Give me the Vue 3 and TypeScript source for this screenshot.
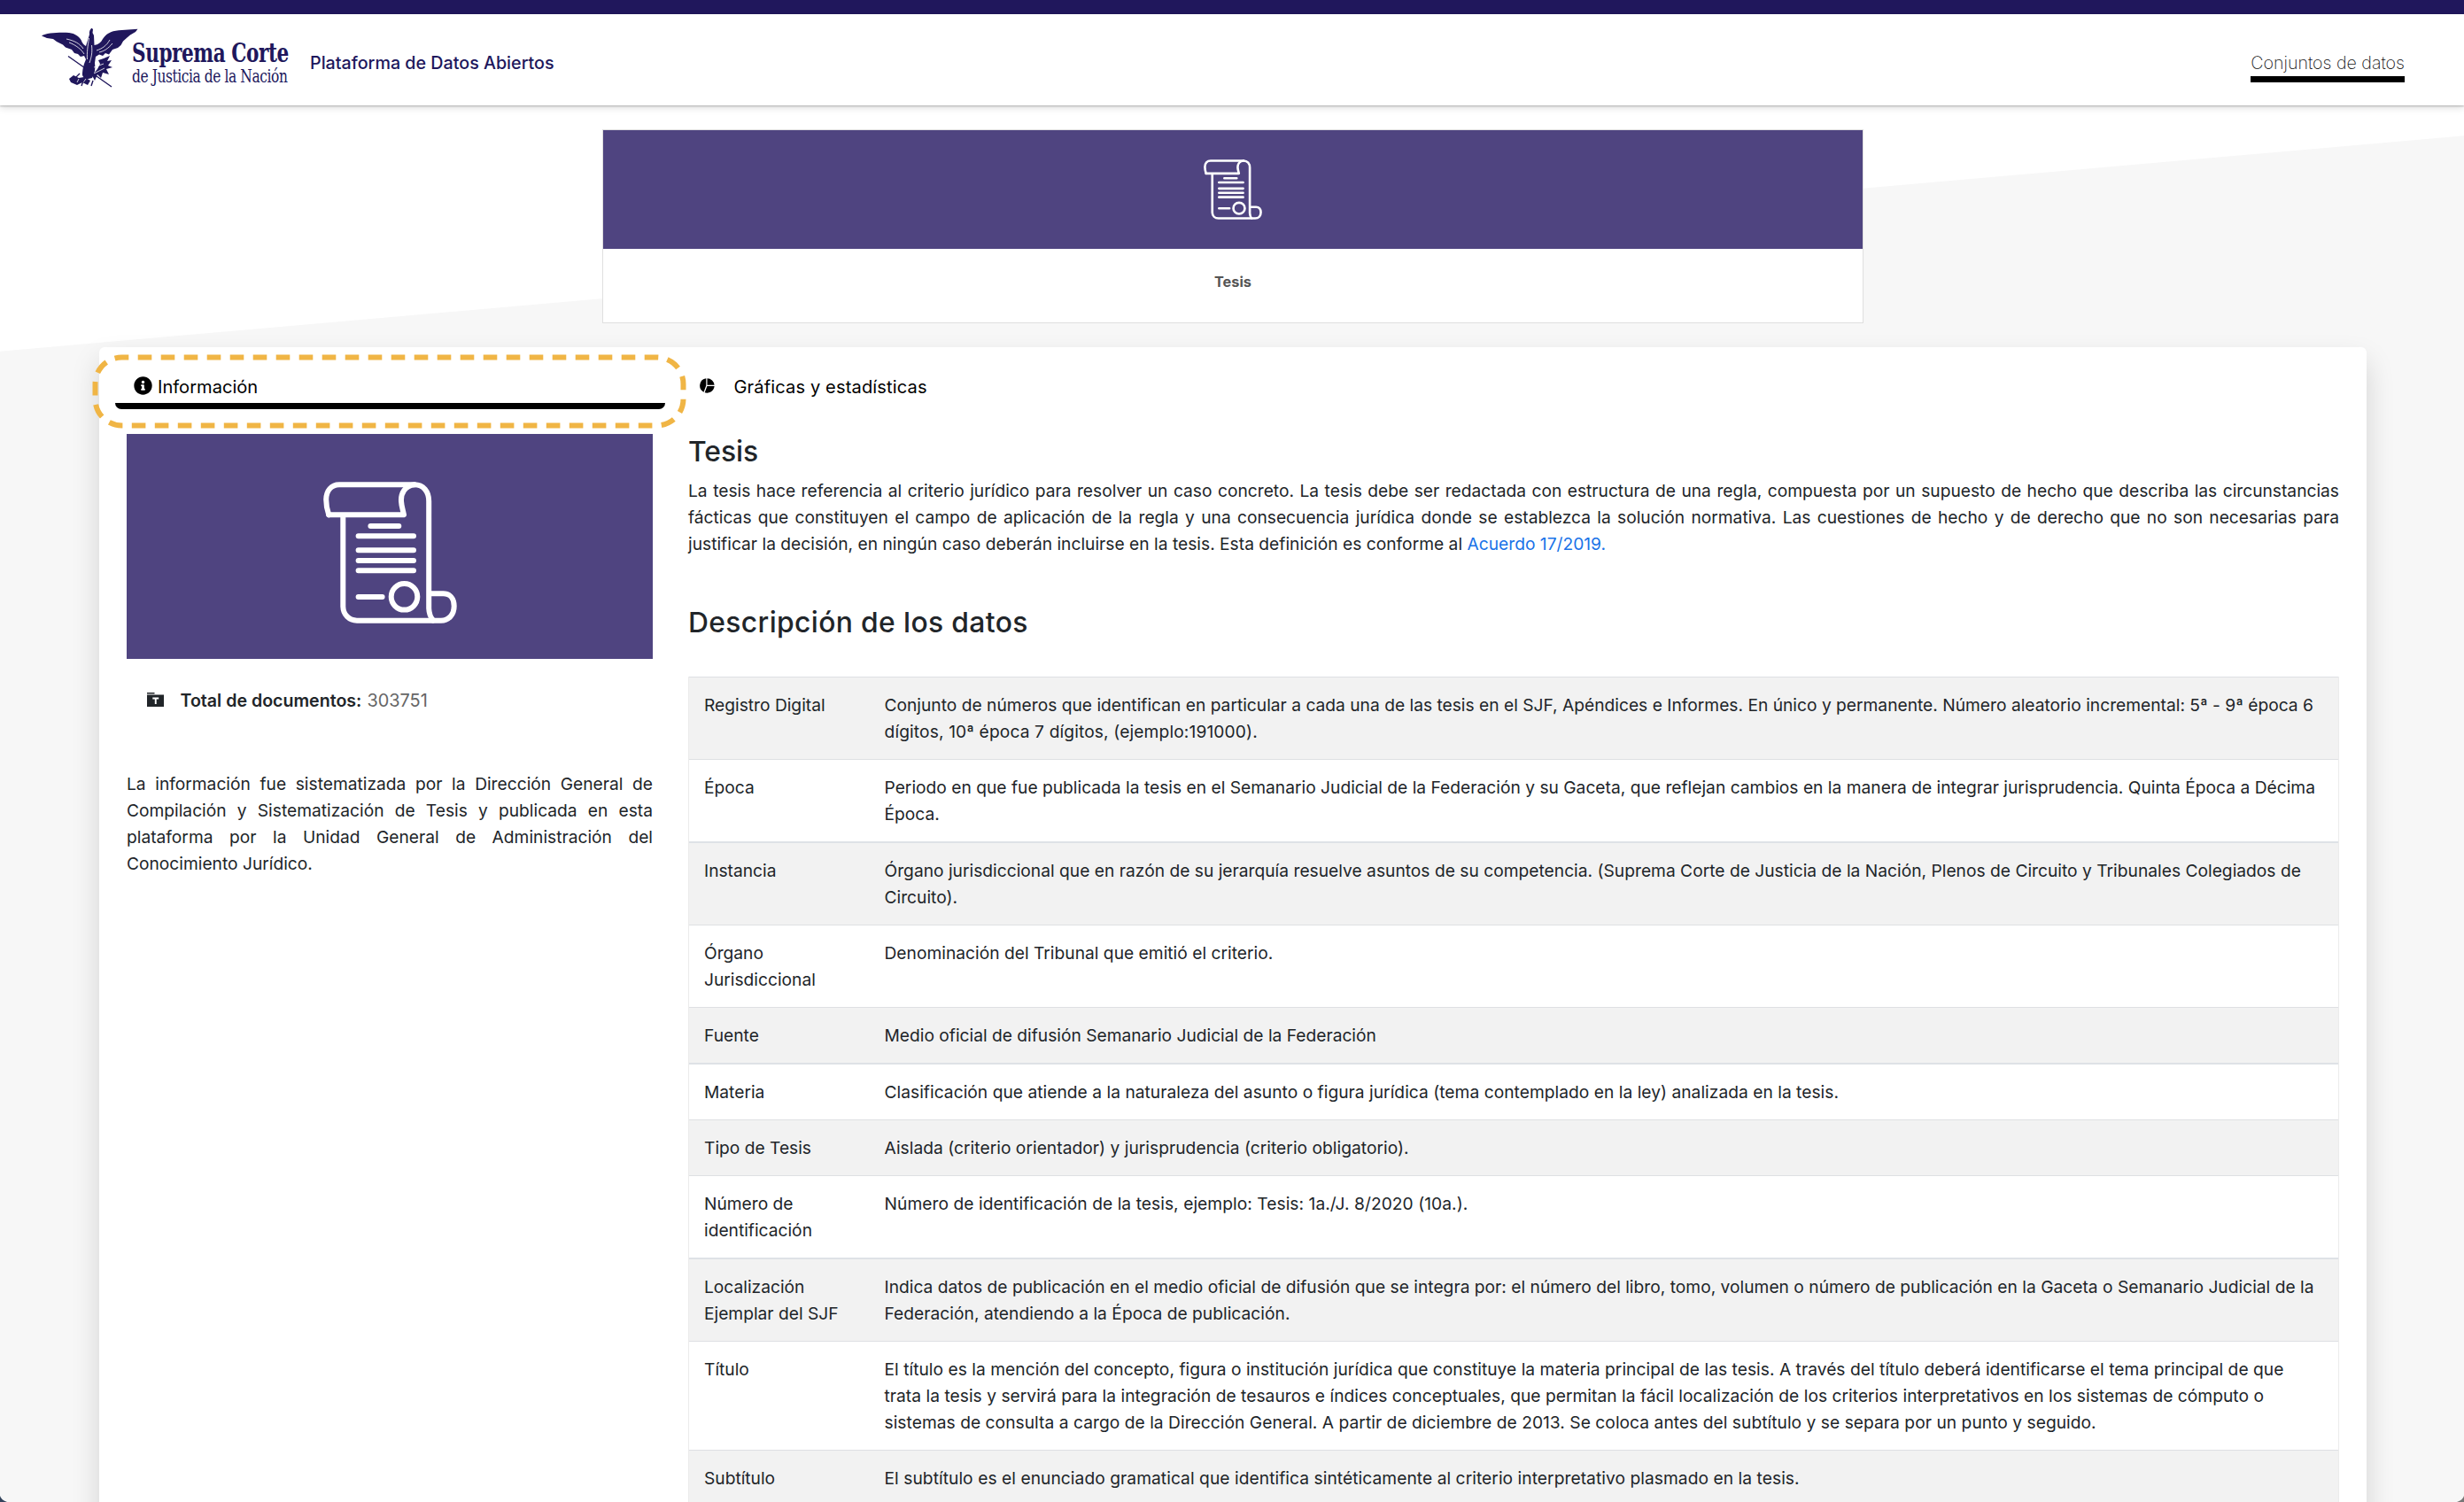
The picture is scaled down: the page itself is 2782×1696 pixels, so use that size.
<script setup lang="ts">
interface Row {
  name: string[]
  lines: string[]
  /** Letter spacing of each line, in pixels. */
  tracking: number[]
  thick?: boolean
}

const definition: string[] = [
  'La tesis hace referencia al criterio jurídico para resolver un caso concreto. La tesis debe ser redactada con estructura de una regla, compuesta por un supuesto de hecho que describa las circunstancias',
  'fácticas que constituyen el campo de aplicación de la regla y una consecuencia jurídica donde se establezca la solución normativa. Las cuestiones de hecho y de derecho que no son necesarias para',
]

const source: string[] = [
  'La información fue sistematizada por la Dirección General de',
  'Compilación y Sistematización de Tesis y publicada en esta',
  'plataforma por la Unidad General de Administración del',
]

const rows: Row[] = [
  {
    name: ['Registro Digital'],
    tracking: [0.005, 0.13],
    lines: [
      'Conjunto de números que identifican en particular a cada una de las tesis en el SJF, Apéndices e Informes. En único y permanente. Número aleatorio incremental: 5ª - 9ª época 6',
      'dígitos, 10ª época 7 dígitos, (ejemplo:191000).',
    ],
  },
  {
    name: ['Época'],
    tracking: [0.01, 0.01],
    lines: [
      'Periodo en que fue publicada la tesis en el Semanario Judicial de la Federación y su Gaceta, que reflejan cambios en la manera de integrar jurisprudencia. Quinta Época a Décima',
      'Época.',
    ],
  },
  {
    name: ['Instancia'],
    tracking: [0.014, 0.01],
    thick: true,
    lines: [
      'Órgano jurisdiccional que en razón de su jerarquía resuelve asuntos de su competencia. (Suprema Corte de Justicia de la Nación, Plenos de Circuito y Tribunales Colegiados de',
      'Circuito).',
    ],
  },
  { name: ['Órgano', 'Jurisdiccional'], tracking: [0.015], lines: ['Denominación del Tribunal que emitió el criterio.'] },
  { name: ['Fuente'], tracking: [0], lines: ['Medio oficial de difusión Semanario Judicial de la Federación'] },
  {
    name: ['Materia'],
    tracking: [0.03],
    thick: true,
    lines: ['Clasificación que atiende a la naturaleza del asunto o figura jurídica (tema contemplado en la ley) analizada en la tesis.'],
  },
  { name: ['Tipo de Tesis'], tracking: [0.035], lines: ['Aislada (criterio orientador) y jurisprudencia (criterio obligatorio).'] },
  { name: ['Número de', 'identificación'], tracking: [0.055], lines: ['Número de identificación de la tesis, ejemplo: Tesis: 1a./J. 8/2020 (10a.).'] },
  {
    name: ['Localización', 'Ejemplar del SJF'],
    tracking: [0.015, 0.03],
    thick: true,
    lines: [
      'Indica datos de publicación en el medio oficial de difusión que se integra por: el número del libro, tomo, volumen o número de publicación en la Gaceta o Semanario Judicial de la',
      'Federación, atendiendo a la Época de publicación.',
    ],
  },
  {
    name: ['Título'],
    tracking: [0.035, 0.03, 0.04],
    lines: [
      'El título es la mención del concepto, figura o institución jurídica que constituye la materia principal de las tesis. A través del título deberá identificarse el tema principal de que',
      'trata la tesis y servirá para la integración de tesauros e índices conceptuales, que permitan la fácil localización de los criterios interpretativos en los sistemas de cómputo o',
      'sistemas de consulta a cargo de la Dirección General. A partir de diciembre de 2013. Se coloca antes del subtítulo y se separa por un punto y seguido.',
    ],
  },
  { name: ['Subtítulo'], tracking: [0.057], lines: ['El subtítulo es el enunciado gramatical que identifica sintéticamente al criterio interpretativo plasmado en la tesis.'] },
]
</script>

<template>
  <div class="page">
    <svg class="slope" viewBox="0 0 2782 1696" preserveAspectRatio="none"><path d="M0 396.7 2782 153.3V1696H0Z" fill="#f7f7f7" /></svg>

    <svg width="0" height="0" class="defs">
      <symbol id="scroll" viewBox="0 0 151 160" preserveAspectRatio="none">
        <g fill="none" stroke="#fff" stroke-width="6" stroke-linecap="round" stroke-linejoin="round">
          <path d="M6.2 37.3C4.4 32 3.2 27 3.2 20C3.4 10 9 3.3 18 3.3H103C113 3.3 119.2 11 119.2 22V143C119.4 148 121 153 124 156.5" />
          <path d="M103 3.3C92 4.5 87.5 13 88 22C88.3 27.5 90 32 91 37.3H6.2" />
          <path d="M22.3 38V141C22.6 150 29 156.7 38 156.7H133C142 156.7 147.7 149.5 147.7 140.5C147.7 132 143 126.3 135.5 126.3H120" />
          <path d="M53.4 50H85.3M39.6 61.3H102M39.6 77.3H102M39.6 89H102M39.6 100.3H102M39.6 130H66.6" />
          <circle cx="91.5" cy="129.8" r="14.8" />
        </g>
      </symbol>
    </svg>

    <div class="strip"></div>
    <header class="header">
      <svg class="eagle" viewBox="0 0 109 68" width="109" height="68">
        <g fill="#20175c">
          <path d="M0 9.500C5 6 20 5.500 31 6C38 7 42 10 44.500 14C46 18 48 20 50 21L54 8C53.500 5 54.500 2 56.500.7L58 2L57.500 6L59 9L59.500 20C64 19.500 67 17 69 13C72 8 78 4 87 3.300L108.500 1.700L106 5L100 8.500L97 11L92 15.500L89.500 20L86 23L80 25L76 30.500L72 29L69 32L65 30.500L61 33L60 40C61 46 60 52 57 57L49 59L46 54C46 46 48 41 50 36L48 32L44 33L41 30L37 29L34 25L27 22.500L24 19.500L17 16L13 13L6 12Z" />
          <path d="M70 35L77 32L74 38L79 37L75 43L80 45L73 47L76 53L69 51L67 57L63 53L60 60L57 54L63 47L66 41L64 37Z" />
          <path d="M31 58L36 54L42 57L48 56L55 60L52 65L46 62L40 65L33 62Z" />
        </g>
        <g fill="none" stroke="#fff" stroke-width=".8">
          <path d="M53.500 12C52 22 51 28 51.500 36M56.500 20C57.500 29 56 34 54 40M31 17C39 20 45 25 48 30M28 13C37 15 43 18 47 24M77 14C73 21 68 24 62 26M80 18C75 24 70 27 65 28M59 45L70 41M59 52L71 46M50 58L47 62M42 58L40 62" />
        </g>
        <path d="M30 32.500L79 67M43 52L35 60M58 60L56 66M47 60L45 66" fill="none" stroke="#20175c" stroke-width="1.400" />
      </svg>
      <div class="court">
        <span class="court-name">Suprema Corte</span>
        <span class="court-sub">de Justicia de la Nación</span>
      </div>
      <span class="brand">Plataforma de Datos Abiertos</span>
      <a class="nav">Conjuntos de datos</a>
    </header>

    <section class="card">
      <div class="card-img"><svg width="66" height="68"><use href="#scroll" /></svg></div>
      <div class="card-title">Tesis</div>
    </section>

    <main class="panel">
      <svg class="ring" width="672" height="86" viewBox="0 0 672 86">
        <rect x="3.5" y="3.500" width="664" height="77" rx="30" fill="none" stroke="#f0b545" stroke-width="6" stroke-dasharray="15.6 10.4" stroke-dashoffset="-18.2" />
      </svg>
      <nav class="tabs">
        <div class="tab active">
          <svg width="21" height="21" viewBox="0 0 512 512"><path d="M256 8C119 8 8 119 8 256s111 248 248 248 248-111 248-248S393 8 256 8zm0 110a42 42 0 1 1 0 84 42 42 0 0 1 0-84zm56 254a12 12 0 0 1-12 12h-88a12 12 0 0 1-12-12v-24a12 12 0 0 1 12-12h12v-64h-12a12 12 0 0 1-12-12v-24a12 12 0 0 1 12-12h64a12 12 0 0 1 12 12v100h12a12 12 0 0 1 12 12z" /></svg>
          <span>Información</span>
        </div>
        <div class="tab">
          <svg width="17" height="17" viewBox="0 0 17 17"><path d="M7.300.2V8.200L4.500 15.700A8.300 8.300 0 0 1 7.300.2ZM8.500.2A8.300 8.300 0 0 1 16.600 7.800H8.500ZM16.600 8.900A8.300 8.300 0 0 1 5.700 16.200L8.400 8.900Z" /></svg>
          <span class="wide">Gráficas y estadísticas</span>
        </div>
      </nav>

      <div class="columns">
        <aside class="side">
          <div class="side-img"><svg width="151" height="160"><use href="#scroll" /></svg></div>
          <div class="total">
            <svg width="19" height="16" viewBox="0 0 19 16"><path d="M0 0H8.500V1.500H0ZM0 2.500H19V16H0Z" fill="#212529" /><path d="M6.300 5.500H13.200V7.500H10.700V13H8.800V7.500H6.300Z" fill="#fff" /></svg>
            <b>Total de documentos:</b><span>303751</span>
          </div>
          <p class="source">
            <span v-for="line in source" :key="line" class="line full">{{ line }}</span>
            <span class="line">Conocimiento Jurídico.</span>
          </p>
        </aside>

        <article class="content">
          <h2 class="first">Tesis</h2>
          <p class="definition">
            <span v-for="line in definition" :key="line" class="line full">{{ line }}</span>
            <span class="line last">justificar la decisión, en ningún caso deberán incluirse en la tesis. Esta definición es conforme al <a>Acuerdo 17/2019.</a></span>
          </p>
          <h2 class="second">Descripción de los datos</h2>
          <div class="table">
            <div v-for="row in rows" :key="row.name[0]" class="row" :class="{ thick: row.thick }">
              <div class="cell name"><span v-for="line in row.name" :key="line" class="line">{{ line }}</span></div>
              <div class="cell">
                <span v-for="(line, i) in row.lines" :key="line" class="line" :style="{ letterSpacing: row.tracking[i] + 'px' }">{{ line }}</span>
              </div>
            </div>
          </div>
        </article>
      </div>
    </main>

    <svg class="corner left" width="8" height="7"><path d="M0 0Q1.500 5 8 7H0Z" fill="#34435c" /></svg>
    <svg class="corner right" width="8" height="7"><path d="M8 0Q6.500 5 0 7H8Z" fill="#777" /></svg>
  </div>
</template>

<style>
body {
  margin: 0;
  background: #fff;
}
</style>

<style scoped>
.page {
  position: relative;
  width: 2782px;
  height: 1696px;
  overflow: hidden;
  background: #fff;
  color: #212529;
  font-family: Inter, "Liberation Sans", sans-serif;
  font-size: 19.2px;
  line-height: 30px;
}
.page * {
  box-sizing: border-box;
}
.slope {
  position: absolute;
  inset: 0;
  width: 2782px;
  height: 1696px;
}
.defs {
  position: absolute;
}
.strip {
  position: relative;
  height: 16px;
  background: #20175c;
}
.header {
  position: relative;
  display: flex;
  align-items: flex-start;
  height: 103px;
  padding: 15px 67px 0 47px;
  background: #fff;
  box-shadow: 0 1px 2px rgba(0, 0, 0, 0.25), 0 3px 8px rgba(0, 0, 0, 0.12);
}
.eagle {
  flex: none;
}
.court {
  display: flex;
  flex-direction: column;
  width: 177px;
  margin: 11.5px 0 0 -7.5px;
  color: #20175c;
  font-family: "DejaVu Serif Condensed", "DejaVu Serif", serif;
  white-space: nowrap;
}
.court-name {
  width: max-content;
  font-size: 29px;
  font-weight: 700;
  line-height: 34px;
  letter-spacing: -0.5px;
  transform: scaleX(0.826);
  transform-origin: 0 0;
}
.court-sub {
  width: max-content;
  margin-top: -2px;
  font-size: 21px;
  line-height: 22px;
  letter-spacing: -0.5px;
  transform: scaleX(0.817);
  transform-origin: 0 0;
}
.brand {
  margin: 25px auto 0 24.5px;
  color: #20175c;
  font-size: 19.7px;
  font-weight: 500;
}
.nav {
  margin-top: 25px;
  height: 37px;
  border-bottom: 7px solid #000;
  color: #111;
  font-size: 19.6px;
  font-weight: 200;
}
.card {
  position: relative;
  width: 1424px;
  height: 219px;
  margin: 27px 0 0 680px;
  border: 1px solid #dfdfdf;
  background: #fff;
}
.card-img {
  display: flex;
  align-items: center;
  justify-content: center;
  height: 134px;
  background: #4f4480;
}
.card-title {
  padding-top: 25px;
  color: #555;
  font-size: 16.3px;
  font-weight: 700;
  line-height: 24px;
  text-align: center;
}
.panel {
  position: relative;
  width: 2560px;
  height: 1400px;
  margin: 27px 0 0 112px;
  border-radius: 6px;
  background: #fff;
  box-shadow: 0 16px 32px rgba(0, 0, 0, 0.15);
}
.ring {
  position: absolute;
  top: 7.5px;
  left: -8.5px;
}
.tabs {
  display: flex;
  padding: 26px 0 0 18px;
  color: #000;
  font-size: 20.1px;
}
.tab {
  display: flex;
  align-items: flex-start;
  width: 621px;
  height: 44px;
  padding: 4px 0 0 21px;
}
.tab svg {
  flex: none;
  margin: 3px 6px 0 0;
}
.tab + .tab {
  padding-left: 39px;
}
.tab + .tab svg {
  margin: 5px 21.5px 0 0;
}
.wide {
  letter-spacing: 0.12px;
}
.active {
  border-bottom: 7px solid #000;
  border-radius: 0 0 7px 7px;
}
.columns {
  display: flex;
  gap: 40px;
  padding: 28px 31px 0;
}
.side {
  width: 594px;
}
.side-img {
  display: flex;
  justify-content: center;
  height: 254px;
  padding-top: 54px;
  background: #4f4480;
}
.total {
  display: flex;
  align-items: flex-start;
  margin-top: 32px;
  padding-left: 23px;
}
.total svg {
  margin: 6px 18.5px 0 0;
}
.total b {
  margin-right: 6px;
  font-size: 19.6px;
  font-weight: 600;
}
.total span {
  color: #666;
  font-size: 19.9px;
}
p {
  margin: 0;
}
.source {
  margin-top: 64px;
}
.line {
  display: block;
  white-space: nowrap;
}
.full {
  white-space: normal;
  text-align: justify;
  text-align-last: justify;
}
.last {
  letter-spacing: 0.012px;
}
.content {
  width: 1864px;
}
h2 {
  margin: 0;
  font-size: 31.8px;
  font-weight: 500;
  line-height: 38px;
}
.first {
  padding-top: 1px;
  margin-bottom: 10px;
}
.second {
  margin: 55px 0 41.6px;
  letter-spacing: 0.37px;
}
.definition a {
  color: #1a73e8;
}
.table {
  border: solid #ebebeb;
  border-width: 0 1px;
}
.row {
  display: flex;
  padding: 16.1px 0 16.25px 17px;
  border-top: 1px solid #dee0e3;
}
.row:nth-child(odd) {
  background: #f2f2f2;
}
.row.thick {
  padding-top: 15.9px;
  padding-bottom: 15.45px;
  border-top: 2px solid #dee2e6;
}
.name {
  width: 203.5px;
}
.corner {
  position: absolute;
  bottom: 0;
}
.left {
  left: 0;
}
.right {
  right: 0;
}
</style>
